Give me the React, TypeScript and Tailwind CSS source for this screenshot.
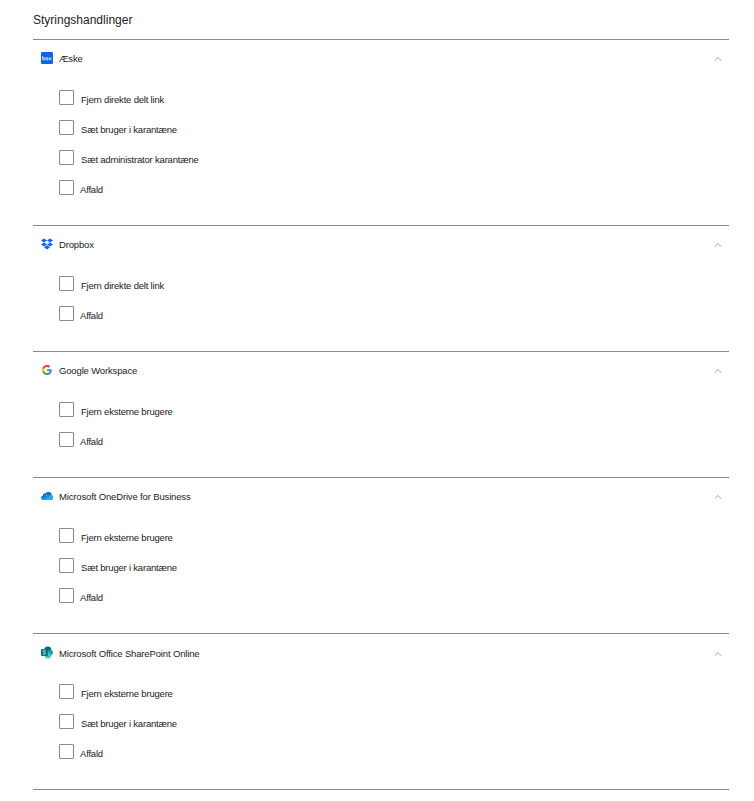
import React from 'react';
import { ChevronUp } from 'lucide-react';

const BoxIcon = () => (
  <svg viewBox="0 0 12 12" className="w-3 h-3">
    <rect width="12" height="12" rx="1.200" fill="#0b66e4" />
    <g fill="none" stroke="#ffffff" strokeWidth="0.8">
      <circle cx="2.800" cy="6.800" r="1.200" />
      <circle cx="6" cy="6.800" r="1.200" />
      <path d="M1.600 4.400v2.400M8 5.400l2.400 2.800M10.400 5.400 8 8.200" />
    </g>
  </svg>
);

const DropboxIcon = () => (
  <svg viewBox="0 0 24 24" className="w-3 h-3">
    <path
      fill="#0f62fe"
      d="M6 1 0 5.200l6 4 6-4L6 1zm12 0-6 4.200 6 4 6-4L18 1zM0 13.200l6 4 6-4-6-4-6 4zm18-4-6 4 6 4 6-4-6-4zM6 18.700l6 4.300 6-4.300-6-4-6 4z"
    />
  </svg>
);

const GoogleIcon = () => (
  <svg viewBox="0 0 24 24" className="w-2.5 h-2.5">
    <path fill="#4285F4" d="M23.500 12.300c0-.8-.1-1.600-.2-2.400H12v4.500h6.500c-.3 1.500-1.100 2.800-2.400 3.600v3h3.900c2.200-2.100 3.500-5.100 3.500-8.700z" />
    <path fill="#34A853" d="M12 24c3.200 0 6-1.100 8-2.900l-3.900-3c-1.100.7-2.500 1.200-4.100 1.200-3.100 0-5.800-2.100-6.700-5H1.200v3.100C3.200 21.300 7.300 24 12 24z" />
    <path fill="#FBBC05" d="M5.300 14.300c-.5-1.500-.5-3.100 0-4.600V6.600H1.200c-1.700 3.400-1.700 7.400 0 10.800l4.100-3.100z" />
    <path fill="#EA4335" d="M12 4.800c1.800 0 3.400.6 4.600 1.800l3.400-3.400C18 1.200 15.200 0 12 0 7.300 0 3.200 2.700 1.200 6.600l4.100 3.100c.9-2.800 3.600-4.900 6.700-4.900z" />
  </svg>
);

const OneDriveIcon = () => (
  <svg viewBox="0 0 24 16" className="w-3 h-2">
    <path fill="#0364b8" d="M9.500 2.200C11 .8 13 0 15 0c3 0 5.600 1.800 6.700 4.500L14 10 9.500 2.200z" />
    <path fill="#0078d4" d="M9.500 2.200C6.500 2 3.800 4.300 3.600 7.300 1.500 7.700 0 9.500 0 11.600c0 1 .3 1.800.8 2.500L12 9 9.500 2.200z" />
    <path fill="#1490df" d="M21.700 6.600c-.3 0-.6 0-.9.1-3-2.800-6.400-2-8.800 2L.8 14.100C1.600 15.300 3 16 4.500 16h16.900L24 8z" />
    <path fill="#28a8ea" d="M21.700 6.600c-2.200 0-4.300 1-5.600 2.700L9 13.500 5 16h16.200c1.600 0 2.800-1.300 2.800-2.900V9.500c-.5-1.700-1.600-2.900-2.300-2.900z" />
  </svg>
);

const SharePointIcon = () => (
  <svg viewBox="0 0 14 14" className="w-3 h-[13px]">
    <circle cx="8" cy="4" r="4" fill="#036c70" />
    <circle cx="10.500" cy="7.200" r="3.300" fill="#1a9ba1" />
    <circle cx="8" cy="10.500" r="3.500" fill="#37c6d0" />
    <rect x="0" y="3" width="8" height="8" rx="1" fill="#03787c" />
    <path d="M5.400 5.200C4.900 4.800 4.400 4.700 3.900 4.700c-.8 0-1.300.4-1.300 1 0 1.200 2.500.9 2.500 2.200 0 .8-.7 1.200-1.400 1.200-.6 0-1.100-.2-1.500-.5" fill="none" stroke="#ffffff" strokeWidth="0.900" />
  </svg>
);

interface Action {
  label: string;
  tight?: boolean;
}

const sections: { name: string; icon: React.ReactNode; tall?: boolean; actions: Action[] }[] = [
  {
    name: 'Æske',
    icon: <BoxIcon />,
    actions: [
      { label: 'Fjern direkte delt link' },
      { label: 'Sæt bruger i karantæne' },
      { label: 'Sæt administrator karantæne' },
      { label: 'Affald', tight: true },
    ],
  },
  {
    name: 'Dropbox',
    icon: <DropboxIcon />,
    actions: [{ label: 'Fjern direkte delt link' }, { label: 'Affald', tight: true }],
  },
  {
    name: 'Google Workspace',
    icon: <GoogleIcon />,
    actions: [{ label: 'Fjern eksterne brugere' }, { label: 'Affald', tight: true }],
  },
  {
    name: 'Microsoft OneDrive for Business',
    icon: <OneDriveIcon />,
    actions: [
      { label: 'Fjern eksterne brugere' },
      { label: 'Sæt bruger i karantæne' },
      { label: 'Affald', tight: true },
    ],
  },
  {
    name: 'Microsoft Office SharePoint Online',
    icon: <SharePointIcon />,
    tall: true,
    actions: [
      { label: 'Fjern eksterne brugere' },
      { label: 'Sæt bruger i karantæne' },
      { label: 'Affald', tight: true },
    ],
  },
];

const App: React.FC = () => {
  return (
    <div className="w-[754px] h-[801px] bg-white text-[#1b1b1b] font-['Liberation_Sans',Arial,sans-serif] overflow-hidden">
      <div className="ml-[33px] w-[696px]">
        <div className="h-[39px] pt-[12px] text-[12px] leading-[17px] text-[#201f1e]">Styringshandlinger</div>
        {sections.map((section) => (
          <section key={section.name} className="border-t border-[#8a8886] pb-[30px]">
            <div className={`h-[35px] flex items-center pl-2 pr-[5px] ${section.tall ? 'pt-[2px]' : ''}`}>
              <span className="w-3 flex justify-center">{section.icon}</span>
              <span className="ml-1.5 pt-[3px] text-[9.500px] leading-[14px] tracking-[-0.15px]">{section.name}</span>
              <ChevronUp className="ml-auto mt-[2px] w-3 h-3 text-[#605e5c]" strokeWidth={1.2} />
            </div>
            <div className="pl-[26px] pt-[15px] flex flex-col gap-[15px]">
              {section.actions.map((action) => (
                <label key={action.label} className="h-[15px] flex items-center">
                  <span className="w-[15px] h-[15px] rounded-[1px] border border-[#8a8886] bg-white" />
                  <span className={`${action.tight ? 'ml-1.5' : 'ml-[7px]'} pt-[5px] text-[9.500px] leading-[14px] tracking-[-0.2px]`}>
                    {action.label}
                  </span>
                </label>
              ))}
            </div>
          </section>
        ))}
        <div className="border-t border-[#8a8886]" />
      </div>
    </div>
  );
};

export default App;
